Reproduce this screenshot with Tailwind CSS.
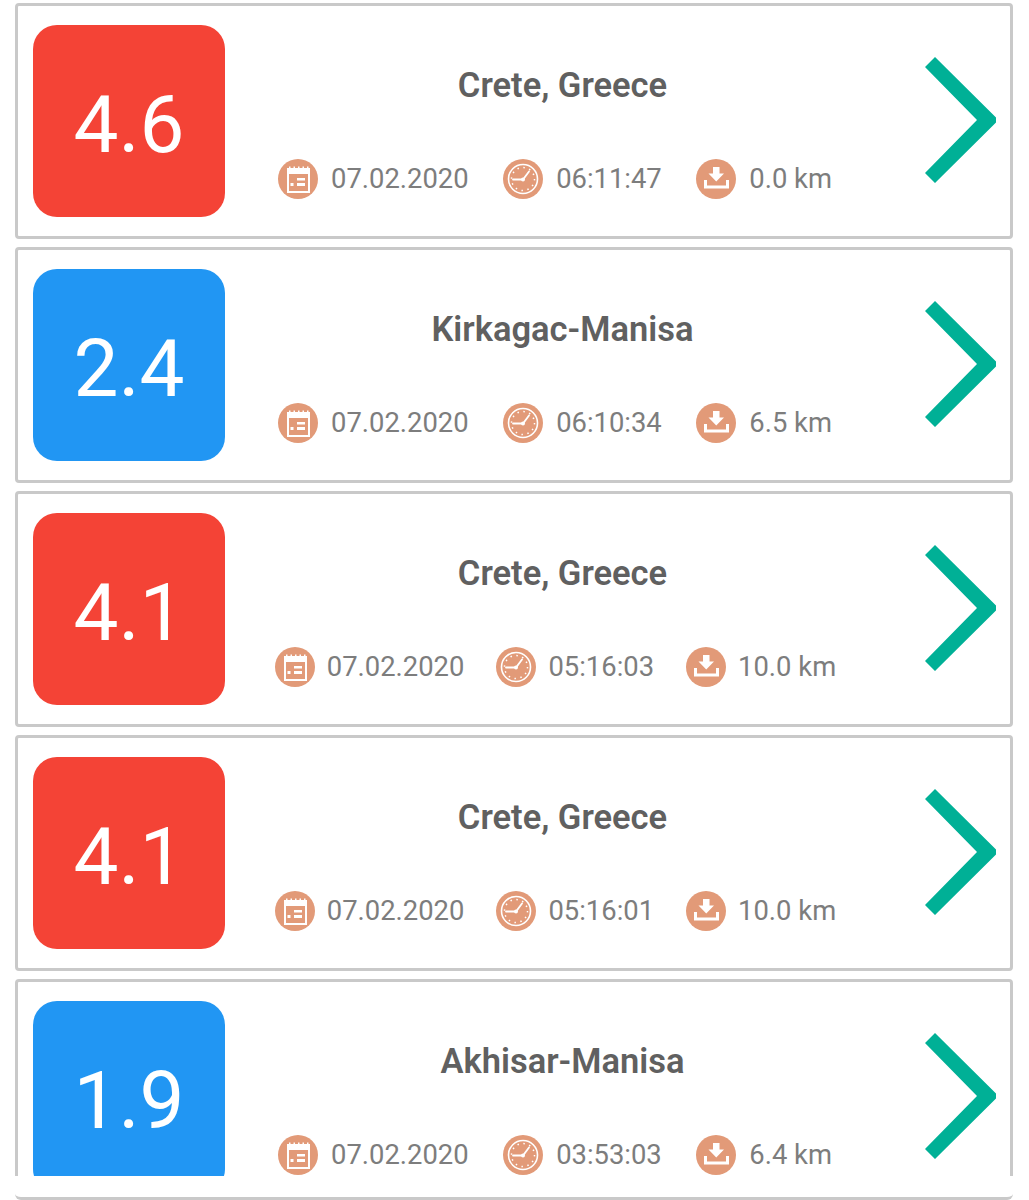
<!DOCTYPE html>
<html lang="en">
<head>
<meta charset="UTF-8">
<title>Earthquakes</title>
<script src="https://cdn.jsdelivr.net/npm/@tailwindcss/browser@4"></script>
</head>
<body class="bg-white font-['Roboto',sans-serif]">
<div class="w-[1029px] h-[1200px] overflow-hidden">
  <div class="h-[1176px] overflow-hidden pt-[3px] pl-[15px] pr-[16px] flex flex-col gap-2">

    <!-- row 1 -->
    <div class="h-[236px] shrink-0 border-[3px] border-[#c9c9c9] rounded-[4px] flex items-start pl-[15px] pt-[19px]">
      <div class="w-[192px] h-[192px] shrink-0 rounded-[24px] bg-[#f44336] text-white text-[80px] pt-[7px] flex items-center justify-center">4.6</div>
      <div class="w-[675px] shrink-0 flex flex-col items-center">
        <div class="h-[80px] mt-[21px] flex items-center text-[34.500px] font-semibold text-[#606060]">Crete, Greece</div>
        <div class="flex items-center gap-[34.500px] mr-[15px] mt-[33px] leading-none text-[#7d7d7d] text-[27.400px]">
          <div class="flex items-center gap-[13px]">
            <svg class="w-10 h-10" viewBox="0 0 40 40"><circle cx="20" cy="20" r="20" fill="#e29a78"/><path fill="#fff" fill-rule="evenodd" d="M9 9h2V7.500h1.500V9h3V7.500H17V9h3V7.500h1.500V9h3V7.500H26V9h3V7.500h1.500V9H32v25H9zM11 15v17h19V15zM19 19h8v2.500h-8zM12.500 24h3v3h-3zM19 24h8v3h-8z"/></svg>
            <span class="pt-[2px]">07.02.2020</span>
          </div>
          <div class="flex items-center gap-[13px]">
            <svg class="w-10 h-10" viewBox="0 0 40 40"><circle cx="20" cy="20" r="20" fill="#e29a78"/><circle cx="20" cy="20" r="14.500" fill="none" stroke="#fff" stroke-width="1.600"/><circle cx="20" cy="20" r="11.500" fill="none" stroke="#fff" stroke-width="1.500" stroke-dasharray="1.500 4.521"/><path fill="none" stroke="#fff" stroke-width="1.800" stroke-linecap="round" d="M10 20.500h10l6-8"/><circle cx="20" cy="20.500" r="2" fill="#fff"/></svg>
            <span class="pt-[2px]">06:11:47</span>
          </div>
          <div class="flex items-center gap-[13px]">
            <svg class="w-10 h-10" viewBox="0 0 40 40"><circle cx="20" cy="20" r="20" fill="#e29a78"/><path fill="#fff" d="M17 8h6.500v6.500H28L20.250 22.500 12.500 14.500H17zM8 21h3v5.500h19V21h3v8.500H8z"/></svg>
            <span class="pt-[2px]">0.0 km</span>
          </div>
        </div>
      </div>
      <svg class="w-[72px] h-[127px] ml-[25px] mt-[32px] shrink-0" viewBox="0 0 72 127"><path fill="#00b096" d="M10 0 71 60.500v5L10 126 0 116 52 63 0 10z"/></svg>
    </div>

    <!-- row 2 -->
    <div class="h-[236px] shrink-0 border-[3px] border-[#c9c9c9] rounded-[4px] flex items-start pl-[15px] pt-[19px]">
      <div class="w-[192px] h-[192px] shrink-0 rounded-[24px] bg-[#2196f3] text-white text-[80px] pt-[7px] flex items-center justify-center">2.4</div>
      <div class="w-[675px] shrink-0 flex flex-col items-center">
        <div class="h-[80px] mt-[21px] flex items-center text-[34.500px] font-semibold text-[#606060]">Kirkagac-Manisa</div>
        <div class="flex items-center gap-[34.500px] mr-[15px] mt-[33px] leading-none text-[#7d7d7d] text-[27.400px]">
          <div class="flex items-center gap-[13px]">
            <svg class="w-10 h-10" viewBox="0 0 40 40"><circle cx="20" cy="20" r="20" fill="#e29a78"/><path fill="#fff" fill-rule="evenodd" d="M9 9h2V7.500h1.500V9h3V7.500H17V9h3V7.500h1.500V9h3V7.500H26V9h3V7.500h1.500V9H32v25H9zM11 15v17h19V15zM19 19h8v2.500h-8zM12.500 24h3v3h-3zM19 24h8v3h-8z"/></svg>
            <span class="pt-[2px]">07.02.2020</span>
          </div>
          <div class="flex items-center gap-[13px]">
            <svg class="w-10 h-10" viewBox="0 0 40 40"><circle cx="20" cy="20" r="20" fill="#e29a78"/><circle cx="20" cy="20" r="14.500" fill="none" stroke="#fff" stroke-width="1.600"/><circle cx="20" cy="20" r="11.500" fill="none" stroke="#fff" stroke-width="1.500" stroke-dasharray="1.500 4.521"/><path fill="none" stroke="#fff" stroke-width="1.800" stroke-linecap="round" d="M10 20.500h10l6-8"/><circle cx="20" cy="20.500" r="2" fill="#fff"/></svg>
            <span class="pt-[2px]">06:10:34</span>
          </div>
          <div class="flex items-center gap-[13px]">
            <svg class="w-10 h-10" viewBox="0 0 40 40"><circle cx="20" cy="20" r="20" fill="#e29a78"/><path fill="#fff" d="M17 8h6.500v6.500H28L20.250 22.500 12.500 14.500H17zM8 21h3v5.500h19V21h3v8.500H8z"/></svg>
            <span class="pt-[2px]">6.5 km</span>
          </div>
        </div>
      </div>
      <svg class="w-[72px] h-[127px] ml-[25px] mt-[32px] shrink-0" viewBox="0 0 72 127"><path fill="#00b096" d="M10 0 71 60.500v5L10 126 0 116 52 63 0 10z"/></svg>
    </div>

    <!-- row 3 -->
    <div class="h-[236px] shrink-0 border-[3px] border-[#c9c9c9] rounded-[4px] flex items-start pl-[15px] pt-[19px]">
      <div class="w-[192px] h-[192px] shrink-0 rounded-[24px] bg-[#f44336] text-white text-[80px] pt-[7px] flex items-center justify-center">4.1</div>
      <div class="w-[675px] shrink-0 flex flex-col items-center">
        <div class="h-[80px] mt-[21px] flex items-center text-[34.500px] font-semibold text-[#606060]">Crete, Greece</div>
        <div class="flex items-center gap-[32px] mr-[14px] mt-[33px] leading-none text-[#7d7d7d] text-[27.400px]">
          <div class="flex items-center gap-[12px]">
            <svg class="w-10 h-10" viewBox="0 0 40 40"><circle cx="20" cy="20" r="20" fill="#e29a78"/><path fill="#fff" fill-rule="evenodd" d="M9 9h2V7.500h1.500V9h3V7.500H17V9h3V7.500h1.500V9h3V7.500H26V9h3V7.500h1.500V9H32v25H9zM11 15v17h19V15zM19 19h8v2.500h-8zM12.500 24h3v3h-3zM19 24h8v3h-8z"/></svg>
            <span class="pt-[2px]">07.02.2020</span>
          </div>
          <div class="flex items-center gap-[12px]">
            <svg class="w-10 h-10" viewBox="0 0 40 40"><circle cx="20" cy="20" r="20" fill="#e29a78"/><circle cx="20" cy="20" r="14.500" fill="none" stroke="#fff" stroke-width="1.600"/><circle cx="20" cy="20" r="11.500" fill="none" stroke="#fff" stroke-width="1.500" stroke-dasharray="1.500 4.521"/><path fill="none" stroke="#fff" stroke-width="1.800" stroke-linecap="round" d="M10 20.500h10l6-8"/><circle cx="20" cy="20.500" r="2" fill="#fff"/></svg>
            <span class="pt-[2px]">05:16:03</span>
          </div>
          <div class="flex items-center gap-[12px]">
            <svg class="w-10 h-10" viewBox="0 0 40 40"><circle cx="20" cy="20" r="20" fill="#e29a78"/><path fill="#fff" d="M17 8h6.500v6.500H28L20.250 22.500 12.500 14.500H17zM8 21h3v5.500h19V21h3v8.500H8z"/></svg>
            <span class="pt-[2px]">10.0 km</span>
          </div>
        </div>
      </div>
      <svg class="w-[72px] h-[127px] ml-[25px] mt-[32px] shrink-0" viewBox="0 0 72 127"><path fill="#00b096" d="M10 0 71 60.500v5L10 126 0 116 52 63 0 10z"/></svg>
    </div>

    <!-- row 4 -->
    <div class="h-[236px] shrink-0 border-[3px] border-[#c9c9c9] rounded-[4px] flex items-start pl-[15px] pt-[19px]">
      <div class="w-[192px] h-[192px] shrink-0 rounded-[24px] bg-[#f44336] text-white text-[80px] pt-[7px] flex items-center justify-center">4.1</div>
      <div class="w-[675px] shrink-0 flex flex-col items-center">
        <div class="h-[80px] mt-[21px] flex items-center text-[34.500px] font-semibold text-[#606060]">Crete, Greece</div>
        <div class="flex items-center gap-[32px] mr-[14px] mt-[33px] leading-none text-[#7d7d7d] text-[27.400px]">
          <div class="flex items-center gap-[12px]">
            <svg class="w-10 h-10" viewBox="0 0 40 40"><circle cx="20" cy="20" r="20" fill="#e29a78"/><path fill="#fff" fill-rule="evenodd" d="M9 9h2V7.500h1.500V9h3V7.500H17V9h3V7.500h1.500V9h3V7.500H26V9h3V7.500h1.500V9H32v25H9zM11 15v17h19V15zM19 19h8v2.500h-8zM12.500 24h3v3h-3zM19 24h8v3h-8z"/></svg>
            <span class="pt-[2px]">07.02.2020</span>
          </div>
          <div class="flex items-center gap-[12px]">
            <svg class="w-10 h-10" viewBox="0 0 40 40"><circle cx="20" cy="20" r="20" fill="#e29a78"/><circle cx="20" cy="20" r="14.500" fill="none" stroke="#fff" stroke-width="1.600"/><circle cx="20" cy="20" r="11.500" fill="none" stroke="#fff" stroke-width="1.500" stroke-dasharray="1.500 4.521"/><path fill="none" stroke="#fff" stroke-width="1.800" stroke-linecap="round" d="M10 20.500h10l6-8"/><circle cx="20" cy="20.500" r="2" fill="#fff"/></svg>
            <span class="pt-[2px]">05:16:01</span>
          </div>
          <div class="flex items-center gap-[12px]">
            <svg class="w-10 h-10" viewBox="0 0 40 40"><circle cx="20" cy="20" r="20" fill="#e29a78"/><path fill="#fff" d="M17 8h6.500v6.500H28L20.250 22.500 12.500 14.500H17zM8 21h3v5.500h19V21h3v8.500H8z"/></svg>
            <span class="pt-[2px]">10.0 km</span>
          </div>
        </div>
      </div>
      <svg class="w-[72px] h-[127px] ml-[25px] mt-[32px] shrink-0" viewBox="0 0 72 127"><path fill="#00b096" d="M10 0 71 60.500v5L10 126 0 116 52 63 0 10z"/></svg>
    </div>

    <!-- row 5, cut off by the footer strip -->
    <div class="h-[236px] shrink-0 border-[3px] border-[#c9c9c9] rounded-[4px] flex items-start pl-[15px] pt-[19px]">
      <div class="w-[192px] h-[192px] shrink-0 rounded-[24px] bg-[#2196f3] text-white text-[80px] pt-[7px] flex items-center justify-center">1.9</div>
      <div class="w-[675px] shrink-0 flex flex-col items-center">
        <div class="h-[80px] mt-[21px] flex items-center text-[34.500px] font-semibold text-[#606060]">Akhisar-Manisa</div>
        <div class="flex items-center gap-[34.500px] mr-[15px] mt-[33px] leading-none text-[#7d7d7d] text-[27.400px]">
          <div class="flex items-center gap-[13px]">
            <svg class="w-10 h-10" viewBox="0 0 40 40"><circle cx="20" cy="20" r="20" fill="#e29a78"/><path fill="#fff" fill-rule="evenodd" d="M9 9h2V7.500h1.500V9h3V7.500H17V9h3V7.500h1.500V9h3V7.500H26V9h3V7.500h1.500V9H32v25H9zM11 15v17h19V15zM19 19h8v2.500h-8zM12.500 24h3v3h-3zM19 24h8v3h-8z"/></svg>
            <span class="pt-[2px]">07.02.2020</span>
          </div>
          <div class="flex items-center gap-[13px]">
            <svg class="w-10 h-10" viewBox="0 0 40 40"><circle cx="20" cy="20" r="20" fill="#e29a78"/><circle cx="20" cy="20" r="14.500" fill="none" stroke="#fff" stroke-width="1.600"/><circle cx="20" cy="20" r="11.500" fill="none" stroke="#fff" stroke-width="1.500" stroke-dasharray="1.500 4.521"/><path fill="none" stroke="#fff" stroke-width="1.800" stroke-linecap="round" d="M10 20.500h10l6-8"/><circle cx="20" cy="20.500" r="2" fill="#fff"/></svg>
            <span class="pt-[2px]">03:53:03</span>
          </div>
          <div class="flex items-center gap-[13px]">
            <svg class="w-10 h-10" viewBox="0 0 40 40"><circle cx="20" cy="20" r="20" fill="#e29a78"/><path fill="#fff" d="M17 8h6.500v6.500H28L20.250 22.500 12.500 14.500H17zM8 21h3v5.500h19V21h3v8.500H8z"/></svg>
            <span class="pt-[2px]">6.4 km</span>
          </div>
        </div>
      </div>
      <svg class="w-[72px] h-[127px] ml-[25px] mt-[32px] shrink-0" viewBox="0 0 72 127"><path fill="#00b096" d="M10 0 71 60.500v5L10 126 0 116 52 63 0 10z"/></svg>
    </div>
  </div>
  <div class="h-[24px] ml-[15px] mr-[16px] border-b-[3px] border-[#c9c9c9] rounded-b-[6px]"></div>
</div>
</body>
</html>
